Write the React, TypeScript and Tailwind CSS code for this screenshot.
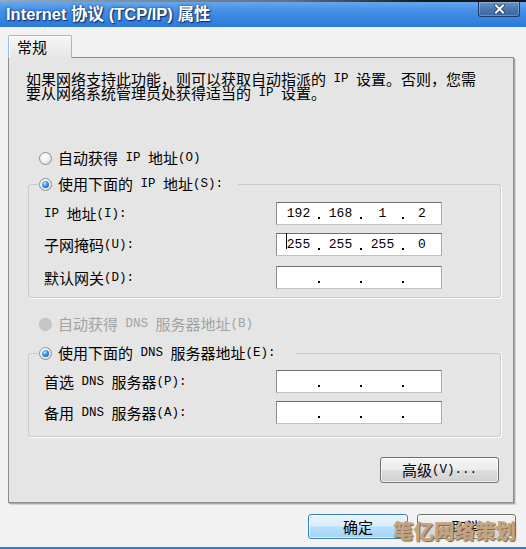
import React from "react";

// SimSun-like mix: CJK at 15px, half-width latin at 12.5px mono (7.5px pitch)
function Mixed({ text }: { text: string }) {
  const parts = text.split(/([\x20-\x7e]+)/).filter(Boolean);
  return (
    <>
      {parts.map((p, i) =>
        /^[\x20-\x7e]+$/.test(p) ? (
          <span key={i} className="whitespace-pre font-['Liberation_Mono',monospace] text-[12.5px]">
            {p}
          </span>
        ) : (
          <span key={i}>{p}</span>
        )
      )}
    </>
  );
}

function Radio({ checked, disabled }: { checked?: boolean; disabled?: boolean }) {
  if (disabled) {
    return <span className="h-[13px] w-[13px] shrink-0 rounded-full border border-[#bdbdbd] bg-[#c6c6c6]" />;
  }
  return (
    <span className="flex h-[13px] w-[13px] shrink-0 items-center justify-center rounded-full border border-[#8e8f8f] bg-[radial-gradient(circle_at_40%_35%,#ffffff_0%,#f1f1f1_45%,#cdcdcd_100%)]">
      {checked && (
        <span className="h-[7px] w-[7px] rounded-full bg-[radial-gradient(circle_at_40%_35%,#c4eaff_0%,#2d8fe8_45%,#0a4ea8_100%)]" />
      )}
    </span>
  );
}

function IpField({ values, caret }: { values: string[]; caret?: boolean }) {
  return (
    <div className="flex h-[23px] w-[166px] border border-t-[#6d6d6d] border-l-[#8c8c8c] border-r-[#ababab] border-b-[#c3c3c3] bg-white pl-[2px] font-['Liberation_Mono',monospace] text-[13px] text-black">
      {values.map((v, i) => (
        <React.Fragment key={i}>
          {i > 0 && (
            <span className="flex w-[3px] flex-col justify-end pb-[5px]">
              <span className="h-[2px] w-[2px] bg-black" />
            </span>
          )}
          <span className={`flex items-center justify-center pt-[1px] ${i === 3 ? "flex-1 pr-[2px]" : "w-[39px]"}`}>
            <span className="relative">
              {caret && i === 0 && <span className="absolute -left-[1px] -top-[2px] h-[16px] w-px bg-black" />}
              {v}
            </span>
          </span>
        </React.Fragment>
      ))}
    </div>
  );
}

function Row({ label, values, caret, className }: { label: string; values: string[]; caret?: boolean; className: string }) {
  return (
    <div className={`flex h-[23px] items-center pl-[15px] ${className}`}>
      <span className="flex h-[16px] w-[232px] items-center leading-[16px]">
        <Mixed text={label} />
      </span>
      <IpField values={values} caret={caret} />
    </div>
  );
}

function Legend({ label, gap }: { label: string; gap: string }) {
  return (
    <legend className={`ml-[9px] flex h-[16px] items-center gap-[6px] bg-[#e5e5e5] pl-[1px] leading-[16px] ${gap}`}>
      <Radio checked />
      <span className="flex h-[16px] items-center">
        <Mixed text={label} />
      </span>
    </legend>
  );
}

export default function App() {
  const empty = ["", "", "", ""];
  const latin = "whitespace-pre font-['Liberation_Sans',sans-serif]";
  return (
    <div className="relative flex h-[549px] w-[526px] flex-col overflow-hidden bg-[#f2f2f2] font-['Noto_Sans_CJK_SC',sans-serif] text-[15px] text-black">
      {/* title bar */}
      <div className="flex h-[27px] flex-col bg-[linear-gradient(180deg,#6fabee_0%,#4590e5_40%,#2a79dc_100%)]">
        <div className="h-[2px] bg-[linear-gradient(90deg,#93aab5_0%,#5d7480_55%,#151d1c_80%,#101614_100%)]" />
        <div className="flex flex-1 items-start justify-between">
          <span className="pl-[6px] pt-[2px] text-[16.5px] font-bold leading-[18px] text-white [text-shadow:0_0_3px_#143a70,1px_1px_1px_#0f2c58]">
            <span className={latin}>Internet </span>
            <span>协议</span>
            <span className={latin}> (TCP/IP) </span>
            <span>属性</span>
          </span>
          <span className="mr-[6px] flex h-[15px] w-[42px] items-center justify-center rounded-b-[3px] border border-t-0 border-[#1f3c68] bg-[linear-gradient(180deg,#6b93c6_0%,#4a76b0_50%,#3a66a2_100%)] shadow-[inset_0_0_0_1px_rgba(255,255,255,0.25)]">
            <svg width="11" height="10" viewBox="0 0 11 10">
              <path d="M2 1.5 L9 8.5 M9 1.5 L2 8.5" stroke="#1b3257" strokeWidth="3.4" strokeLinecap="square" />
              <path d="M2 1.5 L9 8.5 M9 1.5 L2 8.5" stroke="#ffffff" strokeWidth="2" strokeLinecap="square" />
            </svg>
          </span>
        </div>
      </div>

      {/* tab + page */}
      <div className="flex flex-col px-[8px] pt-[8px]">
        <div className="relative z-10 -mb-px flex h-[23px] w-[64px] items-start rounded-t-[2px] border border-b-0 border-[#8fbbe6] bg-[linear-gradient(180deg,#f7f7f7_0%,#ececec_60%,#e5e5e5_100%)] pl-[8px] pt-[2px] leading-[18px] shadow-[inset_1px_1px_0_#ffffff]">
          常规
        </div>
        <div className="flex h-[446px] w-[506px] flex-col border border-[#898c95] bg-[#e5e5e5] shadow-[1px_1px_0_#a9a9a9,2px_2px_0_#d4d4d4]">
          <div className="pl-[17px] pt-[14px]">
            <div className="flex h-[14px] items-center">
              <Mixed text="如果网络支持此功能，则可以获取自动指派的 IP 设置。否则，您需" />
            </div>
            <div className="flex h-[14px] items-center">
              <Mixed text="要从网络系统管理员处获得适当的 IP 设置。" />
            </div>
          </div>

          <div className="ml-[30px] mt-[51px] flex h-[14px] items-center gap-[6px] leading-[16px]">
            <Radio />
            <span className="flex h-[14px] items-center">
              <Mixed text="自动获得 IP 地址(O)" />
            </span>
          </div>

          <fieldset className="ml-[19px] mt-[11px] w-[473px] rounded-[3px] border border-[#c6ccd1] pb-[8px] shadow-[1px_1px_0_#ffffff]">
            <Legend label="使用下面的 IP 地址(S):" gap="pr-[15px]" />
            <Row className="mt-[10px]" label="IP 地址(I):" values={["192", "168", "1", "2"]} />
            <Row className="mt-[8px]" label="子网掩码(U):" values={["255", "255", "255", "0"]} caret />
            <Row className="mt-[10px]" label="默认网关(D):" values={empty} />
          </fieldset>

          <div className="ml-[30px] mt-[19px] flex h-[14px] items-center gap-[6px] leading-[16px] text-[#a3a3a3]">
            <Radio disabled />
            <span className="flex h-[14px] items-center">
              <Mixed text="自动获得 DNS 服务器地址(B)" />
            </span>
          </div>

          <fieldset className="ml-[19px] mt-[14px] w-[473px] rounded-[3px] border border-[#c6ccd1] pb-[12px] shadow-[1px_1px_0_#ffffff]">
            <Legend label="使用下面的 DNS 服务器地址(E):" gap="pr-[19px]" />
            <Row className="mt-[9px]" label="首选 DNS 服务器(P):" values={empty} />
            <Row className="mt-[8px]" label="备用 DNS 服务器(A):" values={empty} />
          </fieldset>

          <div className="mr-[14px] mt-[20px] flex h-[26px] w-[119px] items-center justify-center self-end rounded-[3px] border border-[#707070] bg-[linear-gradient(180deg,#f4f4f4_0%,#ececec_48%,#dedede_52%,#d0d0d0_100%)] leading-[16px] shadow-[inset_0_0_0_1px_rgba(255,255,255,0.7)]">
            <Mixed text="高级(V)..." />
          </div>
        </div>
      </div>

      {/* dialog buttons */}
      <div className="mt-[11px] flex justify-end gap-[9px] pr-[10px]">
        <div className="flex h-[25px] w-[100px] items-center justify-center rounded-[3px] border border-[#3c7fb1] bg-[linear-gradient(180deg,#e8f5fd_0%,#d6eefc_48%,#b7e0fa_52%,#a3d3f4_100%)] leading-[16px] shadow-[inset_0_0_0_1px_rgba(255,255,255,0.6)]">
          确定
        </div>
        <div className="flex h-[25px] w-[99px] items-center justify-center rounded-[3px] border border-[#707070] bg-[linear-gradient(180deg,#f4f4f4_0%,#ececec_48%,#dedede_52%,#d0d0d0_100%)] leading-[16px] shadow-[inset_0_0_0_1px_rgba(255,255,255,0.7)]">
          取消
        </div>
      </div>
      <div className="mt-auto h-[2px] bg-[#3b7bd6]" />

      {/* watermark */}
      <span className="absolute left-[393px] top-[515px] text-[20.5px] font-black leading-[30px] text-[#c4a47f] [text-shadow:1px_1px_1px_#6f6252]">
        笔亿网络策划
      </span>
    </div>
  );
}
